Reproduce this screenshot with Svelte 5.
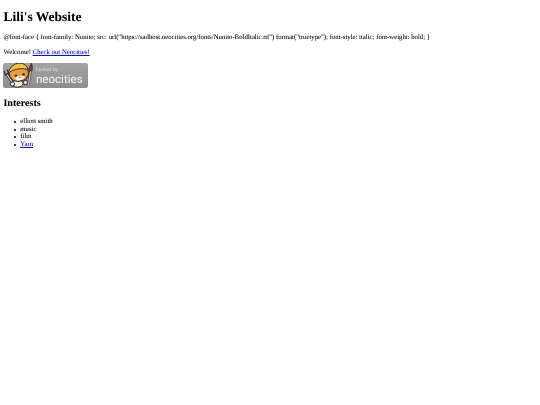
<script>
	const interests = ['elliott smith', 'music', 'film'];
</script>

<main class="page">
	<h1>Lili's Website</h1>
	<p>@font-face {'{'} font-family: Nunito; src: url("https://sadhost.neocities.org/fonts/Nunito-BoldItalic.ttf") format("truetype"); font-style: italic; font-weight: bold; {'}'}</p>
	<p>Welcome! <a href="#neocities">Check out Neocities!</a></p>
	<a class="badge" href="#hosted" aria-label="hosted by neocities">
		<svg class="cat" viewBox="0 0 31 26" width="31" height="26" aria-hidden="true">
			<!-- wrench -->
			<path d="M3.5 12 L9.5 20.5" stroke="#2b2b2b" stroke-width="2.8" fill="none" />
			<path d="M3.5 12 L9.5 20.5" stroke="#e4e4e4" stroke-width="1.3" fill="none" />
			<path d="M1 9 L2.4 13 L6 11 L4 7.8" fill="none" stroke="#2b2b2b" stroke-width="1.2" />
			<!-- body -->
			<ellipse cx="14.5" cy="21.5" rx="5.5" ry="3.6" fill="#f7efe0" stroke="#2b2b2b" stroke-width="1" />
			<circle cx="9.5" cy="22" r="2.1" fill="#f7efe0" stroke="#2b2b2b" stroke-width="1" />
			<circle cx="22.5" cy="20.5" r="2.1" fill="#f7efe0" stroke="#2b2b2b" stroke-width="1" />
			<!-- head -->
			<path d="M6 10 L9 5 L15 2 L21 3 L25 7 L25.5 13 L22.5 17.5 L15.5 19.5 L10 18.5 L7 15 Z" fill="#eb9a3e" stroke="#2b2b2b" stroke-width="1.1" />
			<!-- hard hat -->
			<path d="M5 11 Q8 2 16 1 Q23 1 25 7.5 Q15 4.5 5 11 Z" fill="#f2c23e" stroke="#2b2b2b" stroke-width="0.9" />
			<!-- muzzle and face -->
			<path d="M11.5 16 Q16 12.5 22 14.5 L20 17.5 L14.5 18.8 Z" fill="#fff6e6" />
			<circle cx="13" cy="13.6" r="1.2" fill="#222" />
			<circle cx="20.6" cy="12.4" r="1.2" fill="#222" />
			<path d="M15.6 15 L18 14.6 L17 16.2 Z" fill="#b5473d" />
			<!-- paintbrush -->
			<path d="M25.5 23.5 L27.5 9" stroke="#2b2b2b" stroke-width="2.4" fill="none" />
			<path d="M25.5 23.5 L27.5 9" stroke="#f3e8d2" stroke-width="1.1" fill="none" />
			<path d="M25.9 9 Q26.5 4 28.5 1 Q29.9 5 29.1 9 Z" fill="#8f3a3a" stroke="#2b2b2b" stroke-width="0.7" />
		</svg>
		<span class="badge-text">
			<span class="hosted">hosted by,</span>
			<span class="brand">neocities</span>
		</span>
	</a>
	<h2>Interests</h2>
	<ul>
		{#each interests as item}
			<li>{item}</li>
		{/each}
		<li><a href="#yarn">Yarn</a></li>
	</ul>
</main>

<style>
	:global(body) {
		background: #fff;
		color: #000;
	}

	.page {
		padding: 9px 3.4px 0;
		font-family: "Liberation Serif", serif;
		font-size: 6.75px;
		line-height: 7.7px;
		text-rendering: geometricPrecision;
		text-shadow: 0 0 0.4px rgba(0, 0, 0, 0.2);
		/* the reference is a scaled-down capture, so it is a touch soft */
		filter: blur(0.25px);
	}

	h1 {
		margin: 0 0 9.4px;
		font-size: 13.5px;
		line-height: 15.5px;
	}

	p {
		margin: 0 0 7px;
		white-space: nowrap;
	}

	a {
		color: #00e;
	}

	.badge {
		display: flex;
		align-items: flex-end;
		width: 84.4px;
		height: 25.4px;
		margin-top: -0.5px;
		background: linear-gradient(#a3a3a3, #8e8e8e);
		border-radius: 2.5px;
		text-decoration: none;
		text-shadow: none;
		overflow: hidden;
	}

	.cat {
		flex: none;
		display: block;
	}

	.badge-text {
		display: flex;
		flex-direction: column;
		margin-left: 1.5px;
		padding-bottom: 1.7px;
		font-family: Roboto, sans-serif;
	}

	.hosted {
		font-size: 5px;
		line-height: 6px;
		color: #dedede;
	}

	.brand {
		font-size: 11.6px;
		line-height: 13.6px;
		color: #f8f8f8;
	}

	h2 {
		margin: 10px 0 8.2px;
		font-size: 10.1px;
		line-height: 11.6px;
	}

	ul {
		margin: 0;
		padding-left: 16.9px;
		list-style: none;
	}

	li {
		position: relative;
	}

	li::before {
		content: "";
		position: absolute;
		left: -5.8px;
		top: 2.9px;
		width: 2px;
		height: 2px;
		border-radius: 50%;
		background: #000;
	}
</style>
